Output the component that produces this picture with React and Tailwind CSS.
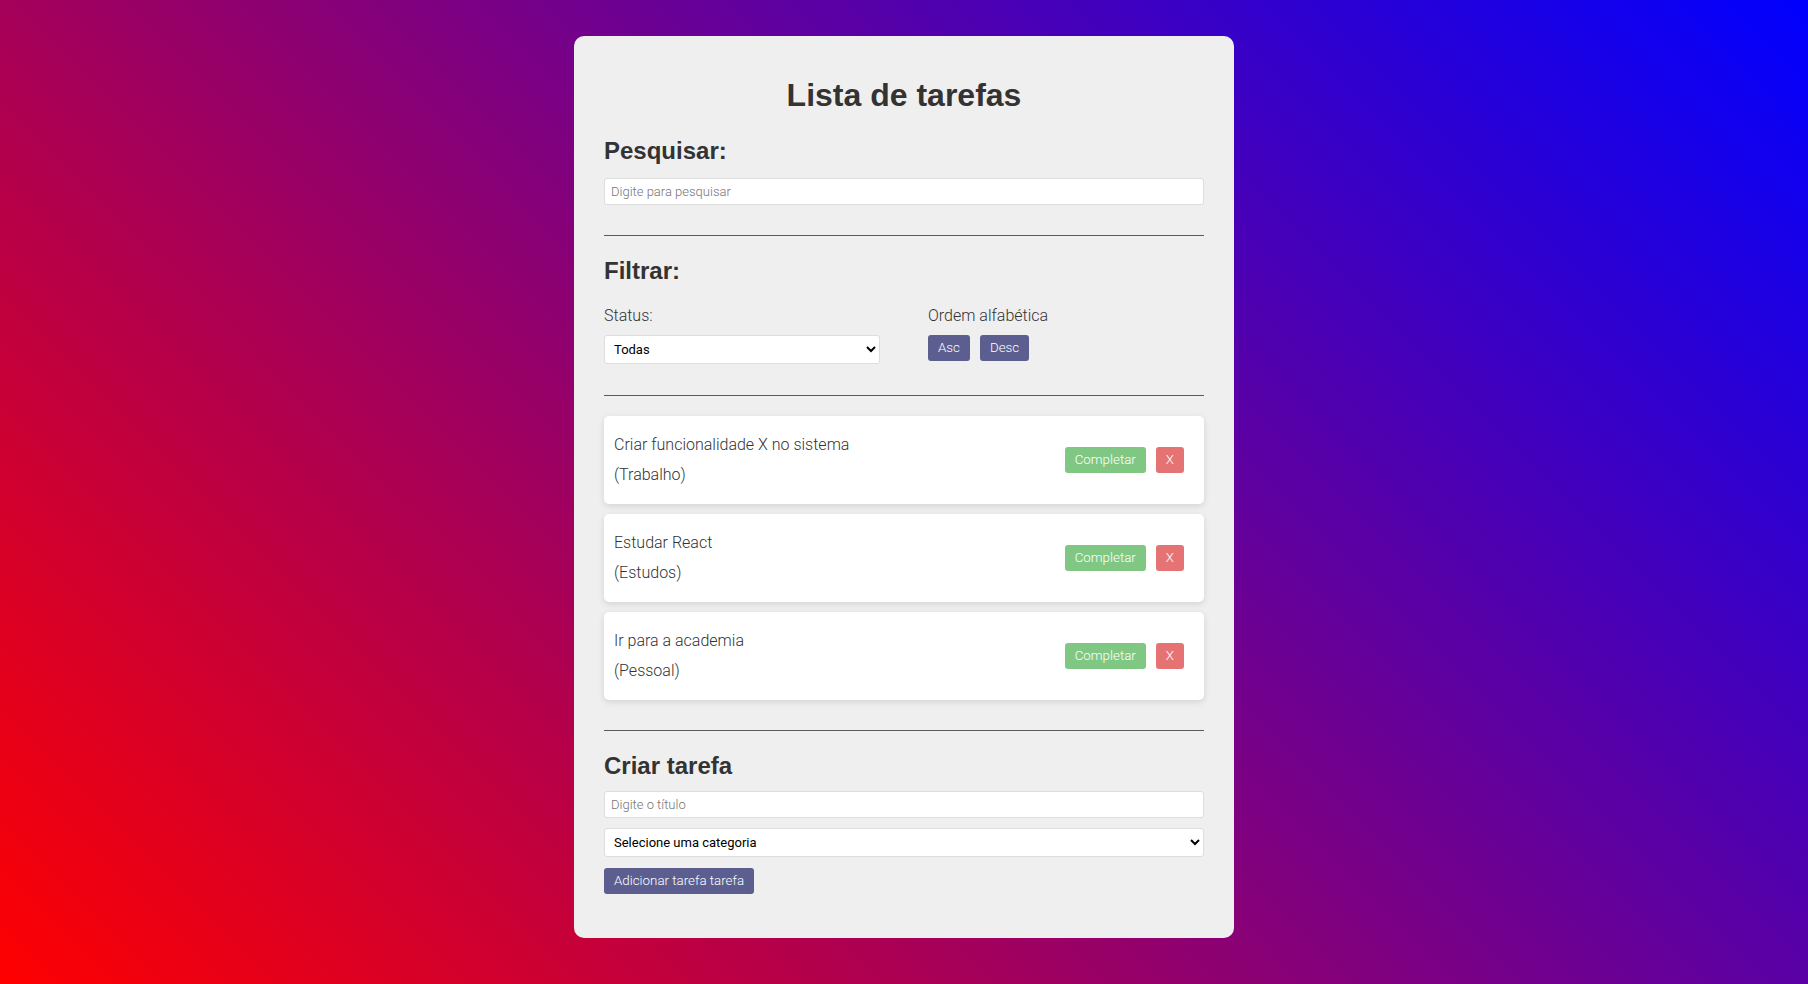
const tarefas = [
  { titulo: "Criar funcionalidade X no sistema", categoria: "Trabalho" },
  { titulo: "Estudar React", categoria: "Estudos" },
  { titulo: "Ir para a academia", categoria: "Pessoal" },
];

function TarefaItem({ tarefa }) {
  return (
    <div className="flex items-center justify-between bg-white rounded-[5px] shadow-[0_2px_6px_rgba(0,0,0,0.12)] pl-[10px] pr-[20px] py-[14px]">
      <div className="leading-[30px] text-[16px] font-light">
        <div>{tarefa.titulo}</div>
        <div>({tarefa.categoria})</div>
      </div>
      <div className="flex items-center gap-[10px]">
        <button className="bg-[#81c784] text-white text-[13.33px] font-light leading-[16px] px-[10px] py-[5px] rounded-[3px]">
          Completar
        </button>
        <button className="bg-[#e57373] text-white text-[13.33px] font-light leading-[16px] px-[10px] py-[5px] rounded-[3px]">
          X
        </button>
      </div>
    </div>
  );
}

export default function App() {
  const heading = "font-['Liberation_Sans',Arial,sans-serif] font-bold text-[#333]";
  return (
    <div className="min-h-screen bg-[linear-gradient(45deg,#ff0000,#0000ff)] flex justify-center pt-[36px] pb-[46px] font-['Roboto',sans-serif]">
      <div className="w-[660px] bg-[#efefef] rounded-[10px] px-[30px] pt-[41px] pb-[44px] text-[#333]">
        <h1 className={`${heading} text-center text-[32px] leading-[37px]`}>Lista de tarefas</h1>

        <h2 className={`${heading} mt-[23px] text-[24px] leading-[28px]`}>Pesquisar:</h2>
        <input
          type="text"
          placeholder="Digite para pesquisar"
          className="mt-[13px] block w-full h-[27px] bg-white border border-[#ddd] rounded-[3px] px-[6px] text-[13px] font-light placeholder:text-[#757575] outline-none"
        />

        <hr className="mt-[30px] border-t border-[#5a5a5a]" />

        <h2 className={`${heading} mt-[21px] text-[24px] leading-[28px]`}>Filtrar:</h2>
        <div className="mt-[21px] flex justify-between">
          <div className="w-[46%]">
            <div className="text-[16px] font-light leading-[19px]">Status:</div>
            <select className="mt-[10px] block w-full h-[29px] bg-white border border-[#ddd] rounded-[3px] px-[5px] text-[13px] text-black">
              <option>Todas</option>
              <option>Completas</option>
              <option>Incompletas</option>
            </select>
          </div>
          <div className="w-[46%]">
            <div className="text-[16px] font-light leading-[19px]">Ordem alfabética</div>
            <div className="mt-[10px] flex gap-[10px]">
              <button className="bg-[#5b5e8f] text-white text-[13.33px] font-light leading-[16px] px-[10px] py-[5px] rounded-[3px]">Asc</button>
              <button className="bg-[#5b5e8f] text-white text-[13.33px] font-light leading-[16px] px-[10px] py-[5px] rounded-[3px]">Desc</button>
            </div>
          </div>
        </div>

        <hr className="mt-[31px] border-t border-[#5a5a5a]" />

        <div className="mt-[20px] flex flex-col gap-[10px]">
          {tarefas.map((t) => (
            <TarefaItem key={t.titulo} tarefa={t} />
          ))}
        </div>

        <hr className="mt-[30px] border-t border-[#5a5a5a]" />

        <h2 className={`${heading} mt-[21px] text-[24px] leading-[28px]`}>Criar tarefa</h2>
        <input
          type="text"
          placeholder="Digite o título"
          className="mt-[11px] block w-full h-[27px] bg-white border border-[#ddd] rounded-[3px] px-[6px] text-[13px] font-light placeholder:text-[#757575] outline-none"
        />
        <select className="mt-[10px] block w-full h-[29px] bg-white border border-[#ddd] rounded-[3px] px-[5px] text-[13px] text-black">
          <option>Selecione uma categoria</option>
          <option>Trabalho</option>
          <option>Pessoal</option>
          <option>Estudos</option>
        </select>
        <button className="mt-[11px] bg-[#5b5e8f] text-white text-[13.33px] font-light leading-[16px] px-[10px] py-[5px] rounded-[3px]">
          Adicionar tarefa tarefa
        </button>
      </div>
    </div>
  );
}
